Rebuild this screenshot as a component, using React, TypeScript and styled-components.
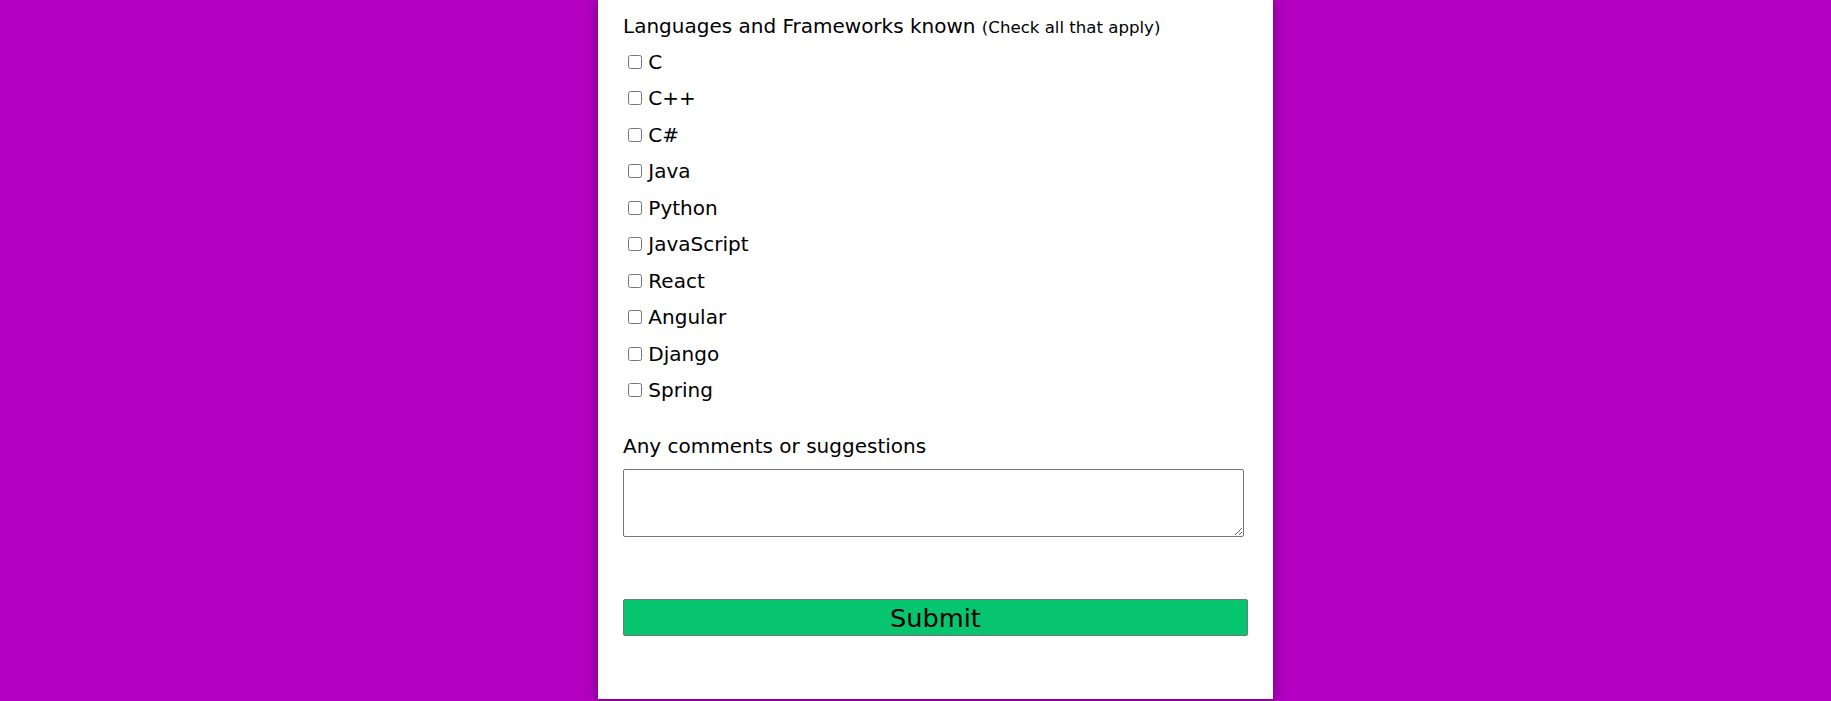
import React from 'react';
import styled, { createGlobalStyle } from 'styled-components';

const GlobalStyle = createGlobalStyle`
    html, body {
        margin: 0;
        padding: 0;
        background: #b300c1;
        overflow: hidden;
    }
    body {
        font-family: "DejaVu Sans", Verdana, sans-serif;
        color: #000;
    }
`;

const languages: string[] = [
    'C',
    'C++',
    'C#',
    'Java',
    'Python',
    'JavaScript',
    'React',
    'Angular',
    'Django',
    'Spring',
];

const App = () => {

    const [ checked, setChecked ] = React.useState<string[]>([]);

    const [ comment, setComment ] = React.useState<string>('');

    const handleCheck: React.ChangeEventHandler<HTMLInputElement> = (e) => {
        const { value } = e.target;
        setChecked(prev => prev.includes(value) ? prev.filter(v => v !== value) : [...prev, value]);
    }

    const handleSubmit: React.FormEventHandler<HTMLFormElement> = (e) => {
        e.preventDefault();
    }

    return (
        <Page>
            <GlobalStyle />

            <Card onSubmit={handleSubmit}>

                <Question>
                    Languages and Frameworks known <Hint>(Check all that apply)</Hint>
                </Question>

                {languages.map(lang => (
                    <Option key={lang}>
                        <Checkbox
                            type="checkbox"
                            name="languages"
                            value={lang}
                            checked={checked.includes(lang)}
                            onChange={handleCheck}
                        />
                        {' '}{lang}
                    </Option>
                ))}

                <CommentLabel htmlFor="comments">Any comments or suggestions</CommentLabel>

                <Textarea
                    id="comments"
                    value={comment}
                    onChange={e => setComment(e.target.value)}
                />

                <SubmitBtn type="submit">Submit</SubmitBtn>

            </Card>
        </Page>
    )
}

export default App;

const Page = styled.div`
    display: flex;
    justify-content: center;
    padding-left: 40px;
    min-height: 701px;
    box-sizing: border-box;
`;

const Card = styled.form`
    width: 675px;
    height: 699px;
    box-sizing: border-box;
    background: #fff;
    padding: 16px 25px 0;
    box-shadow: 0 2px 12px rgba(0, 0, 0, 0.4);
    display: flex;
    flex-direction: column;
`;

const Question = styled.p`
    margin: 0 0 -2px;
    font-size: 20px;
    line-height: 20px;
`;

const Hint = styled.span`
    font-size: 16.6px;
`;

const Option = styled.label`
    display: block;
    margin-top: 14.5px;
    font-size: 20px;
    line-height: 22px;
`;

const Checkbox = styled.input`
    width: 14px;
    height: 14px;
    margin: 3px 0 2px 5px;
`;

const CommentLabel = styled.label`
    display: block;
    margin-top: 34px;
    font-size: 20px;
    line-height: 22px;
`;

const Textarea = styled.textarea`
    box-sizing: border-box;
    width: 621px;
    height: 68px;
    margin-top: 12px;
    border: 1px solid #767676;
    border-radius: 2px;
    resize: vertical;
`;

const SubmitBtn = styled.button`
    box-sizing: border-box;
    width: 100%;
    height: 37px;
    margin-top: 62px;
    background: #07c46f;
    border: 1px solid #767676;
    border-radius: 2px;
    color: #000;
    font-family: "DejaVu Sans", Verdana, sans-serif;
    font-size: 25.6px;
    line-height: 30px;
    padding: 0;
`;
